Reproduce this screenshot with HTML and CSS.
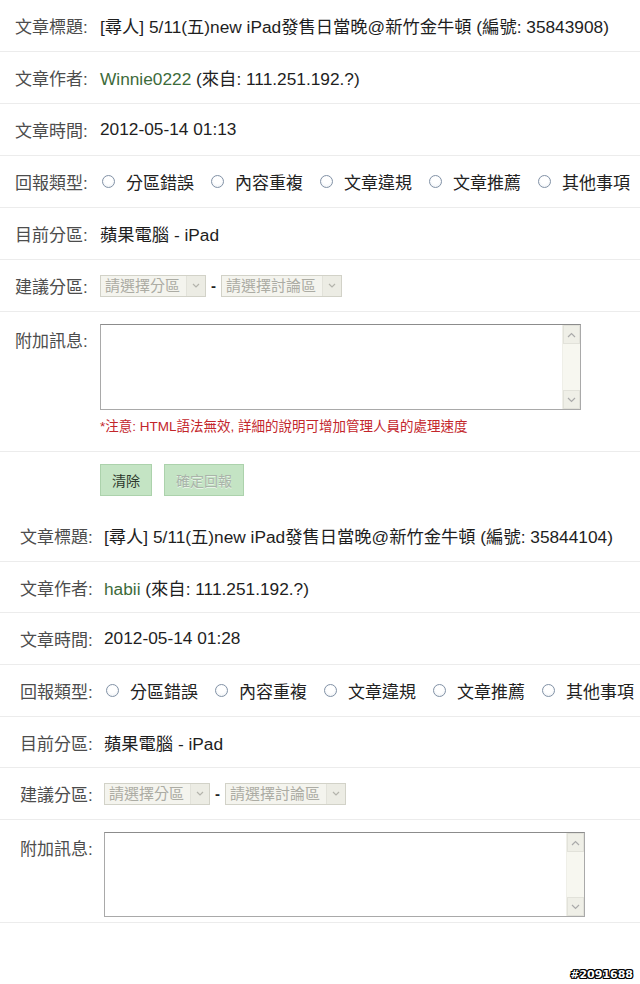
FILE: index.html
```html
<!DOCTYPE html>
<html lang="zh-Hant">
<head>
<meta charset="utf-8">
<title>回報文章</title>
<link rel="stylesheet" href="styles.css">
</head>
<body>
<div class="page">
  <section class="report">
    <div class="row"><span class="label">文章標題:</span><span class="value">[尋人] 5/11(五)new iPad發售日當晚@新竹金牛頓 (編號: 35843908)</span></div>
    <div class="row"><span class="label">文章作者:</span><span class="value"><span class="user">Winnie0222</span> (來自: 111.251.192.?)</span></div>
    <div class="row"><span class="label">文章時間:</span><span class="value">2012-05-14 01:13</span></div>
    <div class="row"><span class="label">回報類型:</span>
      <span class="radios">
        <span class="opt"><span class="dot"></span>分區錯誤</span>
        <span class="opt"><span class="dot"></span>內容重複</span>
        <span class="opt"><span class="dot"></span>文章違規</span>
        <span class="opt"><span class="dot"></span>文章推薦</span>
        <span class="opt"><span class="dot"></span>其他事項</span>
      </span>
    </div>
    <div class="row"><span class="label">目前分區:</span><span class="value">蘋果電腦 - iPad</span></div>
    <div class="row"><span class="label">建議分區:</span>
      <span class="selects">
        <span class="select sel-a"><span class="sel-text">請選擇分區</span><span class="sel-arrow"><svg width="8" height="5" viewBox="0 0 8 5"><path d="M1 1 L4 4 L7 1" fill="none" stroke="#b4b4ac" stroke-width="1.2"/></svg></span></span>
        <span class="dash">-</span>
        <span class="select sel-b"><span class="sel-text">請選擇討論區</span><span class="sel-arrow"><svg width="8" height="5" viewBox="0 0 8 5"><path d="M1 1 L4 4 L7 1" fill="none" stroke="#b4b4ac" stroke-width="1.2"/></svg></span></span>
      </span>
    </div>
    <div class="row row-msg row-msg-1"><span class="label label-msg">附加訊息:</span>
      <div class="msg">
        <div class="textbox">
          <textarea class="ta"></textarea>
          <div class="scrollbar">
            <span class="sb-btn"><svg width="9" height="6" viewBox="0 0 9 6"><path d="M1 5 L4.5 1.5 L8 5" fill="none" stroke="#aaa" stroke-width="1.2"/></svg></span>
            <span class="sb-btn"><svg width="9" height="6" viewBox="0 0 9 6"><path d="M1 1 L4.5 4.5 L8 1" fill="none" stroke="#aaa" stroke-width="1.2"/></svg></span>
          </div>
        </div>
        <p class="note">*注意: HTML語法無效, 詳細的說明可增加管理人員的處理速度</p>
      </div>
    </div>
  </section>

  <div class="actions">
    <button class="btn btn-clear" type="button">清除</button>
    <button class="btn btn-submit" type="button" disabled>確定回報</button>
  </div>

  <section class="report report-2">
    <div class="row"><span class="label">文章標題:</span><span class="value">[尋人] 5/11(五)new iPad發售日當晚@新竹金牛頓 (編號: 35844104)</span></div>
    <div class="row"><span class="label">文章作者:</span><span class="value"><span class="user">habii</span> (來自: 111.251.192.?)</span></div>
    <div class="row"><span class="label">文章時間:</span><span class="value">2012-05-14 01:28</span></div>
    <div class="row"><span class="label">回報類型:</span>
      <span class="radios">
        <span class="opt"><span class="dot"></span>分區錯誤</span>
        <span class="opt"><span class="dot"></span>內容重複</span>
        <span class="opt"><span class="dot"></span>文章違規</span>
        <span class="opt"><span class="dot"></span>文章推薦</span>
        <span class="opt"><span class="dot"></span>其他事項</span>
      </span>
    </div>
    <div class="row"><span class="label">目前分區:</span><span class="value">蘋果電腦 - iPad</span></div>
    <div class="row"><span class="label">建議分區:</span>
      <span class="selects">
        <span class="select sel-a"><span class="sel-text">請選擇分區</span><span class="sel-arrow"><svg width="8" height="5" viewBox="0 0 8 5"><path d="M1 1 L4 4 L7 1" fill="none" stroke="#b4b4ac" stroke-width="1.2"/></svg></span></span>
        <span class="dash">-</span>
        <span class="select sel-b"><span class="sel-text">請選擇討論區</span><span class="sel-arrow"><svg width="8" height="5" viewBox="0 0 8 5"><path d="M1 1 L4 4 L7 1" fill="none" stroke="#b4b4ac" stroke-width="1.2"/></svg></span></span>
      </span>
    </div>
    <div class="row row-msg row-msg-2"><span class="label label-msg">附加訊息:</span>
      <div class="msg">
        <div class="textbox">
          <textarea class="ta"></textarea>
          <div class="scrollbar">
            <span class="sb-btn"><svg width="9" height="6" viewBox="0 0 9 6"><path d="M1 5 L4.5 1.5 L8 5" fill="none" stroke="#aaa" stroke-width="1.2"/></svg></span>
            <span class="sb-btn"><svg width="9" height="6" viewBox="0 0 9 6"><path d="M1 1 L4.5 4.5 L8 1" fill="none" stroke="#aaa" stroke-width="1.2"/></svg></span>
          </div>
        </div>
      </div>
    </div>
  </section>

  <div class="watermark">#2091688</div>
</div>
</body>
</html>
```

FILE: styles.css
```css
* { box-sizing: border-box; }

html, body {
  margin: 0;
  padding: 0;
  background: #fff;
}

body {
  font-family: "Liberation Sans", "Noto Sans CJK TC", Arial, sans-serif;
  font-size: 17px;
  color: #222;
}

.page {
  position: relative;
  width: 640px;
  height: 984px;
  overflow: hidden;
}

.report {
  display: flex;
  flex-direction: column;
}

.row {
  display: flex;
  align-items: center;
  height: 52px;
  padding-left: 15px;
  border-bottom: 1px solid #ececec;
  white-space: nowrap;
}

.report-2 .row {
  padding-left: 20px;
  height: 51.7px;
}

.label {
  flex: 0 0 85px;
  width: 85px;
  color: #4d4d4d;
}

.report-2 .label {
  flex-basis: 84px;
  width: 84px;
}

.value {
  display: block;
  font-size: 17.3px;
  color: #1e1e1e;
}

.user {
  color: #3d6b3a;
}

/* radios */
.radios {
  display: flex;
  align-items: center;
}

.opt {
  display: flex;
  align-items: center;
  margin-right: 17px;
  color: #222;
}

.opt:first-child {
  margin-left: 2px;
}

.opt:last-child {
  margin-right: 0;
}

.dot {
  width: 13px;
  height: 13px;
  border-radius: 50%;
  border: 1px solid #8292a6;
  background: radial-gradient(circle at 50% 40%, #ffffff 40%, #e9edf2 100%);
  margin-right: 11px;
}

/* selects */
.selects {
  display: flex;
  align-items: center;
}

.select {
  display: flex;
  align-items: stretch;
  height: 22px;
  border: 1px solid #d2d2c8;
  background: #f4f4ee;
  color: #acaca4;
  font-size: 15px;
}

.sel-a { width: 106px; }
.sel-b { width: 121px; }

.sel-text {
  flex: 1;
  display: flex;
  align-items: center;
  padding-left: 4px;
  line-height: 20px;
}

.sel-arrow {
  width: 19px;
  display: flex;
  align-items: center;
  justify-content: center;
  border-left: 1px solid #e2e2da;
  background: #ececE4;
}

.dash {
  width: 15px;
  text-align: center;
  font-weight: bold;
  color: #222;
  font-size: 15px;
}

/* message row */
.row-msg {
  align-items: flex-start;
}

.row-msg-1 {
  padding-top: 12px;
  padding-bottom: 16px;
  height: 140px;
}

.report-2 .row-msg-2 {
  height: 103px;
  padding-top: 12px;
}

.label-msg {
  padding-top: 3px;
}

.msg {
  display: flex;
  flex-direction: column;
  align-items: flex-start;
}

.textbox {
  display: flex;
  width: 481px;
  height: 86px;
  border: 1px solid #a9a9a9;
  border-top-color: #8c8c8c;
  background: #fff;
}

.row-msg-2 .textbox {
  height: 85px;
}

.ta {
  flex: 1;
  border: none;
  outline: none;
  resize: none;
  margin: 0;
  padding: 2px;
  background: #fff;
  font-family: inherit;
}

.scrollbar {
  width: 18px;
  display: flex;
  flex-direction: column;
  justify-content: space-between;
  background: #f7f7f0;
  border-left: 1px solid #efefe8;
}

.sb-btn {
  height: 19px;
  display: flex;
  align-items: center;
  justify-content: center;
  background: #efefe7;
  border: 1px solid #e2e2da;
}

.note {
  margin: 8px 0 0;
  font-size: 13.5px;
  line-height: 18px;
  color: #c3262b;
}

/* actions */
.actions {
  display: flex;
  gap: 12px;
  height: 58px;
  padding: 12px 0 0 100px;
}

.btn {
  height: 32px;
  padding: 0;
  border: 1px solid #acd2ac;
  background: #c4e4c4;
  font-family: "Liberation Sans", "Noto Sans CJK TC", sans-serif;
  font-size: 14px;
  color: #2e3a2e;
  cursor: pointer;
}

.btn-clear { width: 52px; }

.btn-submit {
  width: 80px;
  color: #a9b4a9;
  text-shadow: 0 1px 0 #e6f3e6;
}

/* watermark */
.watermark {
  position: absolute;
  right: 7px;
  bottom: 3px;
  font-family: "DejaVu Sans", sans-serif;
  font-weight: bold;
  font-size: 11px;
  line-height: 13px;
  color: #fff;
  text-shadow: 1px 0 0 #000, -1px 0 0 #000, 0 1px 0 #000, 0 -1px 0 #000,
               1px 1px 0 #000, -1px -1px 0 #000, 1px -1px 0 #000, -1px 1px 0 #000;
}
```
